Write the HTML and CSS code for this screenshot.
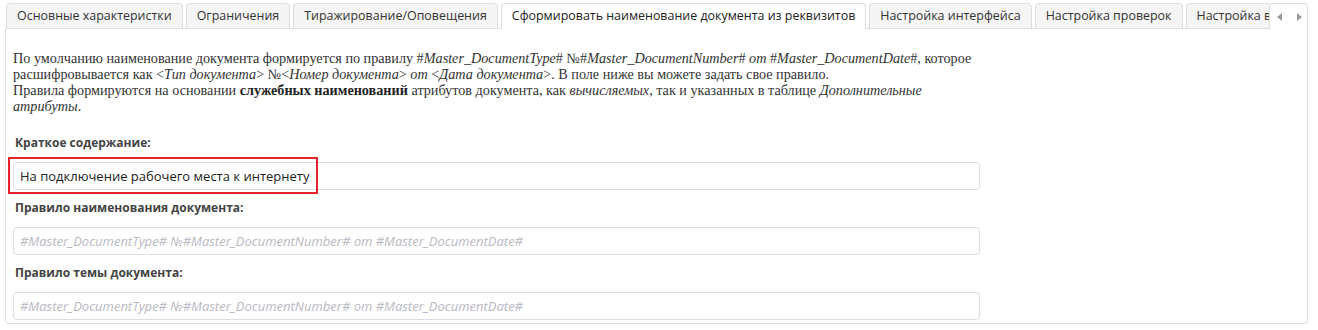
FILE: index.html
```html
<!DOCTYPE html>
<html lang="ru">
<head>
<meta charset="utf-8">
<link rel="stylesheet" href="styles.css">
</head>
<body>
<div class="wrap">
  <div class="tabbar">
    <ul class="tabs">
      <li class="tab">Основные характеристки</li>
      <li class="tab">Ограничения</li>
      <li class="tab">Тиражирование/Оповещения</li>
      <li class="tab active">Сформировать наименование документа из реквизитов</li>
      <li class="tab">Настройка интерфейса</li>
      <li class="tab">Настройка проверок</li>
      <li class="tab">Настройка видимости</li>
    </ul>
    <div class="arrows">
      <span class="arr left"></span>
      <span class="arr right"></span>
    </div>
  </div>
  <div class="panel">
    <p class="desc">По умолчанию наименование документа формируется по правилу #<i>Master_DocumentType</i># №#<i>Master_DocumentNumber</i># <i>от</i> #<i>Master_DocumentDate</i>#, которое<br>расшифровывается как &lt;<i>Тип документа</i>&gt; №&lt;<i>Номер документа</i>&gt; <i>от</i> &lt;<i>Дата документа</i>&gt;. В поле ниже вы можете задать свое правило.<br>Правила формируются на основании <b>служебных наименований</b> атрибутов документа, как <i>вычисляемых</i>, так и указанных в таблице <i>Дополнительные</i><br><i>атрибуты</i>.</p>
    <div class="field">
      <label class="lbl">Краткое содержание:</label>
      <div class="inp-wrap">
        <div class="inp">На подключение рабочего места к интернету</div>
        <div class="mark"></div>
      </div>
    </div>
    <div class="field">
      <label class="lbl">Правило наименования документа:</label>
      <div class="inp ph">#Master_DocumentType# №#Master_DocumentNumber# от #Master_DocumentDate#</div>
    </div>
    <div class="field">
      <label class="lbl">Правило темы документа:</label>
      <div class="inp ph">#Master_DocumentType# №#Master_DocumentNumber# от #Master_DocumentDate#</div>
    </div>
  </div>
</div>
</body>
</html>
```
FILE: styles.css
```css
* { box-sizing: border-box; }
html, body { margin: 0; padding: 0; background: #fff; }
body { font-family: "Open Sans", "Noto Sans", sans-serif; color: #333; }
.wrap { padding: 3px 5px 0 5px; width: 1313px; }
.tabbar { display: flex; position: relative; height: 26px; margin-bottom: -1px; z-index: 1; }
.tabs { list-style: none; margin: 0; padding: 0 0 0 1px; display: flex; gap: 3px; overflow: hidden; width: 1267px; white-space: nowrap; }
.tab { flex: none; height: 26px; padding: 0 10px; font-size: 12.45px; line-height: 24px; color: #333; background: #f5f5f5; border: 1px solid #ddd; border-radius: 4px 4px 0 0; }
.tab.active { background: #fff; border-bottom-color: #fff; color: #222; }
.arrows { flex: none; width: 39px; height: 26px; background: #fff; border: 1px solid #ddd; border-bottom: none; border-radius: 4px 4px 0 0; display: flex; justify-content: space-between; align-items: center; padding: 0 5px 0 7px; }
.arr { width: 0; height: 0; border-top: 4px solid transparent; border-bottom: 4px solid transparent; }
.arr.left { border-right: 5px solid #999; }
.arr.right { border-left: 5px solid #999; }
.panel { border: 1px solid #dcdce4; border-radius: 0 0 4px 4px; padding: 21px 327px 6px 7px; height: 296px; }
.desc { margin: 0; font-family: "Liberation Serif", "DejaVu Serif", serif; font-size: 14.2px; line-height: 16px; color: #333; white-space: nowrap; }
.desc b { color: #222; }
.desc + .field { margin-top: 21px; }
.lbl { display: block; font-size: 12px; font-weight: 700; color: #444; line-height: 16px; margin-bottom: 11px; padding-left: 2px; }
.field + .field .lbl { margin-top: 10px; }
.inp-wrap { position: relative; }
.inp { height: 28px; border: 1px solid #dcdce6; border-radius: 4px; padding: 0 6px; font-size: 13px; line-height: 26px; color: #222; }
.inp.ph { color: #b9b9c3; font-style: italic; font-size: 13px; }
.mark { position: absolute; left: -5px; top: -5px; width: 310px; height: 37px; border: 2px solid #e3222a; }
```
